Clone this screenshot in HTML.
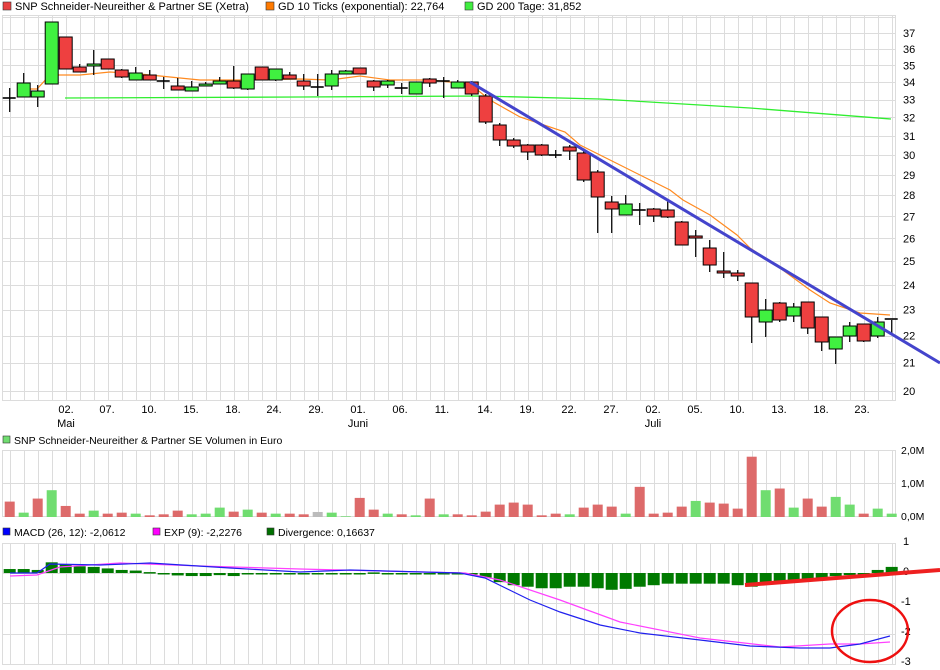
<!DOCTYPE html>
<html><head><meta charset="utf-8"><style>
html,body{margin:0;padding:0;background:#fff;width:940px;height:670px;overflow:hidden}
svg{display:block;font-family:"Liberation Sans",sans-serif}
text{font-size:11px;fill:#000}
</style></head><body>
<svg id="s" width="940" height="670" viewBox="0 0 940 670">
<g id="grid" stroke="#dcdcdc" stroke-width="1" shape-rendering="crispEdges"></g>
<rect x="3" y="2" width="8" height="8" fill="#e84040" stroke="#333" stroke-width=".6"/>
<text x="15" y="10">SNP Schneider-Neureither &amp; Partner SE (Xetra)</text>
<rect x="266" y="2" width="8" height="8" fill="#ff7a00" stroke="#333" stroke-width=".6"/>
<text x="278" y="10">GD 10 Ticks (exponential): 22,764</text>
<rect x="465" y="2" width="8" height="8" fill="#40ee40" stroke="#333" stroke-width=".6"/>
<text x="477" y="10">GD 200 Tage: 31,852</text>
<rect x="3" y="436" width="7" height="7" fill="#70dd70" stroke="#333" stroke-width=".6"/>
<text x="14" y="444" style="font-size:10.5px">SNP Schneider-Neureither &amp; Partner SE Volumen in Euro</text>
<rect x="3" y="528" width="7" height="7" fill="#0000ff" stroke="#333" stroke-width=".6"/>
<text x="14" y="536" style="font-size:10.5px">MACD (26, 12): -2,0612</text>
<rect x="153" y="528" width="7" height="7" fill="#ff00ff" stroke="#333" stroke-width=".6"/>
<text x="164" y="536" style="font-size:10.5px">EXP (9): -2,2276</text>
<rect x="267" y="528" width="7" height="7" fill="#007000" stroke="#333" stroke-width=".6"/>
<text x="278" y="536" style="font-size:10.5px">Divergence: 0,16637</text>
<g id="pax"></g>
<g text-anchor="middle">
<text x="66" y="413">02.</text><text x="107" y="413">07.</text><text x="149" y="413">10.</text><text x="191" y="413">15.</text><text x="233" y="413">18.</text><text x="274" y="413">24.</text><text x="316" y="413">29.</text><text x="358" y="413">01.</text><text x="400" y="413">06.</text><text x="442" y="413">11.</text><text x="485" y="413">14.</text><text x="527" y="413">19.</text><text x="569" y="413">22.</text><text x="611" y="413">27.</text><text x="653" y="413">02.</text><text x="695" y="413">05.</text><text x="737" y="413">10.</text><text x="779" y="413">13.</text><text x="821" y="413">18.</text><text x="862" y="413">23.</text>
<text x="66" y="427">Mai</text><text x="358" y="427">Juni</text><text x="653" y="427">Juli</text>
</g>
<text x="901" y="454" style="font-size:10.5px">2,0M</text>
<text x="901" y="487" style="font-size:10.5px">1,0M</text>
<text x="901" y="520" style="font-size:10.5px">0,0M</text>
<text x="903" y="545">1</text><text x="903" y="575">0</text><text x="901" y="605">-1</text><text x="901" y="635">-2</text><text x="901" y="665">-3</text>
<g id="vol"></g>
<g id="div"></g>
<polyline fill="none" stroke="#30ee30" stroke-width="1.3" points="65,98 300,97 480,96 600,99 750,108 891,119"/>
<polyline fill="none" stroke="#ff8a20" stroke-width="1.2" points="30,89 37,89 50,75 80,75 110,72 140,74 170,77 200,80 250,80 300,79 330,80 360,76 390,80 430,80 470,84 490,100 520,117 565,132 580,145 610,160 640,175 670,190 683,200 710,215 737,235 750,248 780,268 810,290 830,303 860,313 890,315"/>
<g id="cand"></g>
<line x1="470" y1="82" x2="940" y2="363" stroke="#4444cc" stroke-width="3"/>
<polyline fill="none" stroke="#ff40ff" stroke-width="1.2" points="10,576 37,575 60,567 120,563 200,566 300,569 465,573 500,580 560,600 620,622 700,638 780,647 830,644 860,644 890,642"/>
<polyline fill="none" stroke="#2020ee" stroke-width="1.2" points="10,573 37,573 50,564 100,565 150,563 230,568 300,572 350,570 460,573 485,578 530,600 560,612 600,625 640,633 700,640 750,646 800,648 830,648 860,644 890,636"/>
<line x1="745" y1="585" x2="940" y2="570" stroke="#ee2020" stroke-width="4"/>
<ellipse cx="870" cy="631" rx="38" ry="31" fill="none" stroke="#ee1010" stroke-width="2.5"/>
</svg>
<script>
var NS="http://www.w3.org/2000/svg";
function el(p,t,a){var e=document.createElementNS(NS,t);for(var k in a)e.setAttribute(k,a[k]);document.getElementById(p).appendChild(e);return e;}
function X(k){return 9.7+14*k;}
function PY(p){return 33+(Math.log(37)-Math.log(p))*581.9;}
for(var k=-1;k<64;k++){var x=Math.round(X(k)+0.3)+0.5;
 if(x>2&&x<896){el('grid','line',{x1:x,y1:15,x2:x,y2:400});el('grid','line',{x1:x,y1:450,x2:x,y2:517});el('grid','line',{x1:x,y1:543,x2:x,y2:664});}}
el('grid','line',{x1:2.5,y1:15,x2:2.5,y2:400});el('grid','line',{x1:895.5,y1:15,x2:895.5,y2:400});
el('grid','line',{x1:2.5,y1:450,x2:2.5,y2:517});el('grid','line',{x1:895.5,y1:450,x2:895.5,y2:517});
el('grid','line',{x1:2.5,y1:543,x2:2.5,y2:664});el('grid','line',{x1:895.5,y1:543,x2:895.5,y2:664});
for(var p=38;p>=20;p--){var y=Math.round(PY(p))+0.5;if(y>=15&&y<=400){el('grid','line',{x1:2,y1:y,x2:896,y2:y});
 if(p<38){var t=el('pax','text',{x:903,y:PY(p)+4});t.textContent=p;}}}
el('grid','line',{x1:2,y1:400.5,x2:896,y2:400.5});el('grid','line',{x1:2,y1:15.5,x2:896,y2:15.5});
[450.5,483.5,516.5].forEach(function(y){el('grid','line',{x1:2,y1:y,x2:896,y2:y});});
[543.5,573.5,603.5,634.5,664.5].forEach(function(y){el('grid','line',{x1:2,y1:y,x2:896,y2:y});});
var C=[['c',98,98,88,112],['g',83,97,73,97],['g',91,97,85,107],['g',22,84,22,84],['r',37,69,37,69],['r',67,72,64,72],['g',64,66,50,75],['r',59,69,59,69],['r',70,77,69,78],['g',73,80,67,80],['r',75,80,70,80],['c',81,81,77,89],['r',86,90,78,90],['g',87,91,81,91],['g',84,86,82,86],['g',81,84,77,84],['r',81,88,66,89],['g',74,89,74,90],['r',67,80,67,80],['g',69,80,69,81],['r',75,79,72,79],['r',81,86,74,90],['c',87,87,74,96],['g',74,86,70,90],['g',71,74,70,74],['r',68,74,68,74],['r',81,87,80,91],['g',81,85,80,88],['c',88,88,83,94],['g',82,94,82,94],['r',79,83,78,87],['c',81,81,77,98],['g',82,88,80,88],['r',82,94,81,96],['r',96,122,94,124],['r',125,140,123,146],['r',140,146,138,148],['r',145,152,144,160],['r',145,155,144,156],['c',155,155,150,158],['r',147,151,145,160],['r',153,180,150,182],['r',172,197,170,233],['r',202,209,196,233],['g',204,215,195,215],['c',210,210,203,225],['r',209,216,208,222],['r',210,217,200,218],['r',222,245,221,245],['r',236,238,230,257],['r',248,265,240,272],['r',271,273,252,278],['r',273,276,270,281],['r',283,317,283,343],['g',310,322,299,337],['r',303,320,302,322],['g',307,316,303,322],['r',302,328,302,334],['r',317,342,317,351],['g',337,349,337,364],['g',326,336,322,342],['r',324,341,324,342],['g',322,336,317,338],['c',319,319,320,334]];
C.forEach(function(c,k){var x=X(k);
 el('cand','line',{x1:x,y1:c[3],x2:x,y2:c[4],stroke:'#000','stroke-width':1.2});
 if(c[0]=='c'){el('cand','line',{x1:x-7,y1:c[1],x2:x+6,y2:c[1],stroke:'#000','stroke-width':1.6});}
 else{var h=Math.max(c[2]-c[1],2);el('cand','rect',{x:x-6.5,y:c[1],width:13,height:h,fill:c[0]=='g'?'#40f040':'#ee4040',stroke:'#000','stroke-width':1});}
});
var V=[['r',.46],['g',.13],['r',.55],['g',.8],['r',.33],['r',.1],['g',.19],['r',.1],['r',.13],['g',.1],['r',.05],['r',.08],['r',.19],['g',.08],['g',.1],['g',.28],['r',.16],['g',.22],['r',.13],['g',.1],['r',.1],['r',.08],['y',.15],['g',.13],['g',.02],['r',.57],['r',.22],['g',.1],['r',.08],['g',.05],['r',.55],['g',.08],['r',.08],['r',.05],['r',.16],['r',.37],['r',.43],['r',.37],['r',.05],['r',.1],['g',.08],['r',.28],['r',.37],['r',.31],['g',.1],['r',.9],['r',.1],['r',.13],['r',.31],['g',.48],['r',.43],['r',.4],['r',.25],['r',1.8],['g',.8],['r',.85],['g',.28],['r',.55],['r',.31],['g',.6],['g',.37],['r',.1],['g',.25],['g',.1]];
V.forEach(function(v,k){var h=v[1]*33.5;el('vol','rect',{x:X(k)-5,y:517-h,width:10,height:h,fill:v[0]=='g'?'#70dd70':(v[0]=='r'?'#dd6a6a':'#bbbbbb')});});
var D=[.13,.13,.1,.35,.28,.22,.2,.15,.1,.08,.03,-.04,-.08,-.1,-.1,-.07,-.1,-.04,-.03,-.02,-.01,-.02,-.03,-.02,-.03,-.01,.02,-.01,-.02,-.03,-.02,-.02,-.02,-.03,-.15,-.3,-.4,-.45,-.5,-.5,-.45,-.45,-.5,-.55,-.52,-.45,-.4,-.35,-.35,-.35,-.35,-.35,-.4,-.45,-.35,-.3,-.25,-.2,-.15,-.1,-.07,-.03,.1,.2];
D.forEach(function(d,k){var h=Math.abs(d)*30.5;el('div','rect',{x:X(k)-6,y:d>0?573-h:573,width:12,height:Math.max(h,1.5),fill:'#007a00'});});
</script>
</body></html>
